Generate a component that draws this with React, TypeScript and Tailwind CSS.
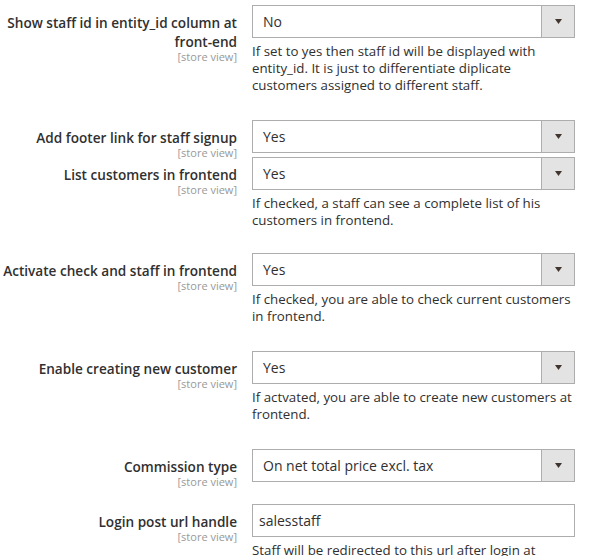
import React from "react";

// Config rows — spacing per row is taken from the screenshot
type Row = {
	label: string;
	kind: "select" | "input";
	value: string;
	note?: string;
	mt: string;
};

const ROWS: Row[] = [
	{
		label: "Show staff id in entity_id column at front-end",
		kind: "select",
		value: "No",
		note: "If set to yes then staff id will be displayed with entity_id. It is just to differentiate diplicate customers assigned to different staff.",
		mt: "mt-[5px]",
	},
	{ label: "Add footer link for staff signup", kind: "select", value: "Yes", mt: "mt-[26px]" },
	{
		label: "List customers in frontend",
		kind: "select",
		value: "Yes",
		note: "If checked, a staff can see a complete list of his customers in frontend.",
		mt: "-mt-[1px]",
	},
	{
		label: "Activate check and staff in frontend",
		kind: "select",
		value: "Yes",
		note: "If checked, you are able to check current customers in frontend.",
		mt: "mt-[24px]",
	},
	{
		label: "Enable creating new customer",
		kind: "select",
		value: "Yes",
		note: "If actvated, you are able to create new customers at frontend.",
		mt: "mt-[26px]",
	},
	{ label: "Commission type", kind: "select", value: "On net total price excl. tax", mt: "mt-[26px]" },
	{
		label: "Login post url handle",
		kind: "input",
		value: "salesstaff",
		note: "Staff will be redirected to this url after login at frontend.",
		mt: "mt-[17px]",
	},
];

function SelectBox({ value }: { value: string }) {
	return (
		<div className="flex h-[33px] w-[323px] border border-[#adadad] bg-white">
			<div className="flex flex-1 items-center pl-[10px] text-[14px] text-[#303030]">{value}</div>
			<div className="flex w-[33px] items-center justify-center border-l border-[#adadad] bg-[#e3e3e3]">
				<svg width="7" height="5" viewBox="0 0 7 5">
					<path d="M0 0H7L3.5 5Z" fill="#41362f" />
				</svg>
			</div>
		</div>
	);
}

function TextBox({ value }: { value: string }) {
	return (
		<div className="flex h-[33px] w-[323px] items-center border border-[#adadad] bg-white pl-[6px] text-[14px] text-[#303030]">
			{value}
		</div>
	);
}

export default function App() {
	return (
		<div
			className="h-[556px] w-[596px] overflow-hidden bg-white"
			style={{ fontFamily: '"Open Sans", "Noto Sans", sans-serif' }}
		>
			{ROWS.map((r) => (
				<div key={r.label} className={`flex items-start ${r.mt}`}>
					<div className="w-[237px] shrink-0 pt-[8px] text-right">
						<div className="text-[13.6px] leading-[19px] font-semibold text-[#303030]">{r.label}</div>
						<div className="text-[11px] leading-[11px] text-[#999999]">[store view]</div>
					</div>
					<div className="ml-[15px]">
						{r.kind === "select" ? <SelectBox value={r.value} /> : <TextBox value={r.value} />}
						{r.note && (
							<p className="mt-[5px] w-[323px] text-[13.3px] leading-[17px] text-[#303030]">{r.note}</p>
						)}
					</div>
				</div>
			))}
		</div>
	);
}
